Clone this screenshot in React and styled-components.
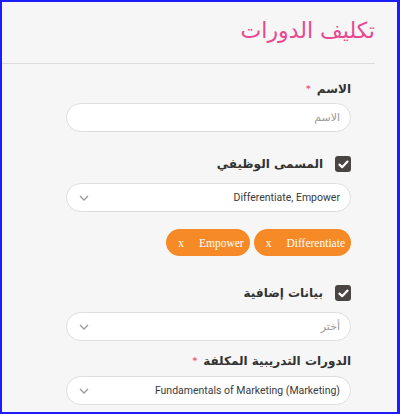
import styled, { createGlobalStyle } from "styled-components";

const Global = createGlobalStyle`
  html, body {
    margin: 0;
    padding: 0;
    background: #f6f6f6;
  }
  * {
    box-sizing: border-box;
  }
`;

const Frame = styled.div`
  direction: rtl;
  width: 400px;
  height: 414px;
  border: 2px solid #1d1dfb;
  border-right-width: 3px;
  background: #f6f6f6;
  overflow: hidden;
  font-family: Roboto, "DejaVu Sans", sans-serif;
  color: #333;
`;

const Header = styled.div`
  margin-right: 22px;
  height: 62px;
  border-bottom: 1px solid #dcdcdc;
  display: flex;
  align-items: center;
`;

const Title = styled.h1`
  margin: 0;
  font-family: "DejaVu Sans", sans-serif;
  font-size: 22px;
  font-weight: 400;
  color: #e8488f;
  padding-bottom: 4px;
`;

const Form = styled.div`
  padding: 0 46px 0 64px;
`;

const Label = styled.div`
  display: flex;
  align-items: center;
  gap: ${(p) => (p.$check ? "12px" : "6px")};
  height: 20px;
  margin-top: ${(p) => p.$top}px;
  font-family: "DejaVu Sans", sans-serif;
  font-size: 12px;
  font-weight: 700;
  color: #333;
`;

const Star = styled.span`
  color: #e0607a;
  font-size: 9px;
`;

const Box = styled.span`
  width: 16px;
  height: 16px;
  border-radius: 3px;
  background: #4a4542;
  display: flex;
  align-items: center;
  justify-content: center;
`;

const Input = styled.div`
  height: 29px;
  margin-top: ${(p) => p.$top}px;
  border: 1px solid #dedede;
  border-radius: 15px;
  background: #fff;
  display: flex;
  align-items: center;
  justify-content: space-between;
  padding: 0 10px 0 12px;
  font-size: 10.5px;
  color: ${(p) => (p.$muted ? "#9a9a9a" : "#3a3a3a")};
`;

const Arabic = styled.span`
  font-family: "DejaVu Sans", sans-serif;
  font-size: 11px;
`;

const Value = styled.span`
  direction: ltr;
`;

const Chips = styled.div`
  display: flex;
  gap: 4px;
  margin-top: 17px;
`;

const Chip = styled.div`
  height: 27px;
  border-radius: 14px;
  background: #f68a27;
  color: #fff;
  font-family: "Liberation Serif", serif;
  font-size: 11.5px;
  display: flex;
  align-items: center;
  gap: 15px;
  padding: 0 6px 0 12px;
`;

const Check = () => (
  <svg width="11" height="9" viewBox="0 0 11 9">
    <path d="M1.5 4.6 L4.2 7.2 L9.5 1.6" fill="none" stroke="#fff" strokeWidth="2.2" strokeLinecap="round" strokeLinejoin="round" />
  </svg>
);

const Chevron = () => (
  <svg width="10" height="6" viewBox="0 0 10 6">
    <path d="M1 1 L5 5 L9 1" fill="none" stroke="#999" strokeWidth="1.3" />
  </svg>
);

const Select = ({ top, muted, children }) => (
  <Input $top={top} $muted={muted}>
    {children}
    <Chevron />
  </Input>
);

const App = () => {
  return (
    <>
      <Global />
      <Frame>
        <Header>
          <Title>تكليف الدورات</Title>
        </Header>
        <Form>
          <Label $top={15}>
            الاسم <Star>*</Star>
          </Label>
          <Input $top={4} $muted>
            <Arabic>الاسم</Arabic>
          </Input>

          <Label $top={22} $check>
            <Box>
              <Check />
            </Box>
            المسمى الوظيفي
          </Label>
          <Select top={9}>
            <Value>Differentiate, Empower</Value>
          </Select>
          <Chips>
            <Chip>
              <span>Differentiate</span>
              <span>x</span>
            </Chip>
            <Chip>
              <span>Empower</span>
              <span>x</span>
            </Chip>
          </Chips>

          <Label $top={27} $check>
            <Box>
              <Check />
            </Box>
            بيانات إضافية
          </Label>
          <Select top={9} muted>
            <Arabic>أختر</Arabic>
          </Select>

          <Label $top={10}>
            الدورات التدريبية المكلفة <Star>*</Star>
          </Label>
          <Select top={5}>
            <Value>Fundamentals of Marketing (Marketing)</Value>
          </Select>
        </Form>
      </Frame>
    </>
  );
};

export default App;
